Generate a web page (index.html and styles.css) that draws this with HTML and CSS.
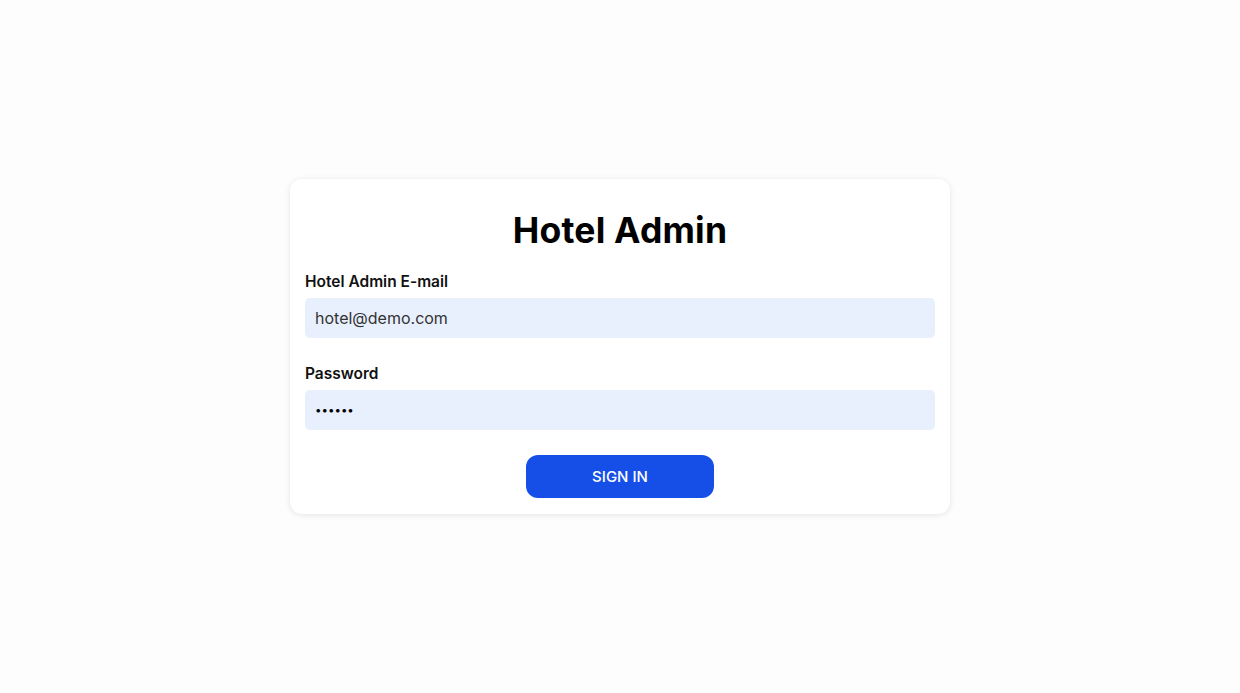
FILE: index.html
```html
<!DOCTYPE html>
<html lang="en">
<head>
  <meta charset="UTF-8" />
  <meta name="viewport" content="width=device-width, initial-scale=1.0" />
  <title>Hotel Admin</title>
  <link rel="stylesheet" href="styles.css">
</head>
<body>
  <form class="loginCard" id="loginForm">
    <h1>Hotel Admin</h1>
    <div class="field">
      <label for="email">Hotel Admin E-mail</label>
      <input type="email" id="email" value="hotel@demo.com" />
    </div>
    <div class="field">
      <label for="password">Password</label>
      <input type="password" id="password" class="pwd" value="123456" />
    </div>
    <button type="submit" class="signInBtn">SIGN IN</button>
  </form>
</body>
</html>
```

FILE: styles.css
```css
*{box-sizing:border-box;}
html,body{height:100%;}
body{margin:0;font-family:"Inter","Open Sans",sans-serif;background:#fdfdfd;display:flex;align-items:center;justify-content:center;color:#000;}
.loginCard{width:660px;background:#fff;border-radius:12px;box-shadow:0 1px 6px rgba(0,0,0,.1);padding:30px 15px 16px;display:flex;flex-direction:column;}
h1{font-size:35.5px;font-weight:700;text-align:center;margin:0 0 18px;line-height:44px;letter-spacing:.2px;}
.field{display:flex;flex-direction:column;margin-bottom:25px;}
label{font-size:15.5px;font-weight:600;margin-bottom:5px;line-height:22px;color:#111;}
input{width:100%;height:40px;border:none;border-radius:5px;background:#e8f0fe;padding:0 10px;font-size:16px;font-family:inherit;color:#333;outline:none;}
.pwd{font-size:11.5px;color:#000;}
.signInBtn{align-self:center;width:188px;height:43px;border:none;border-radius:12px;background:#164fe8;color:#fff;font-family:inherit;font-size:15px;font-weight:500;cursor:pointer;}
```
